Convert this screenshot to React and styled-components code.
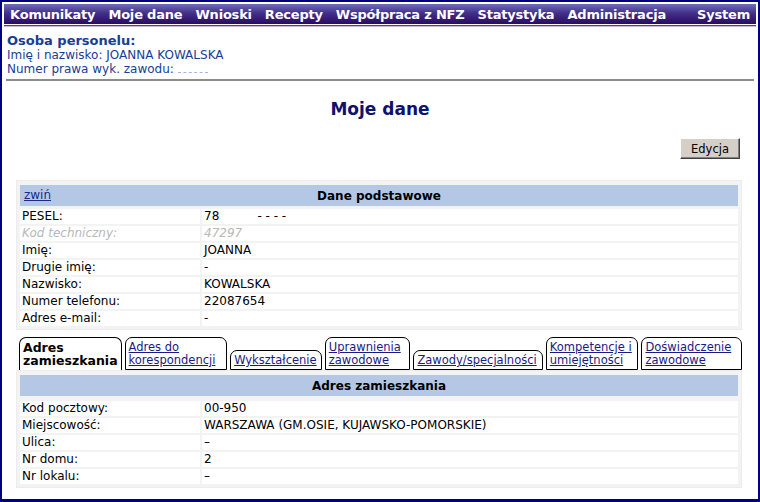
import React from 'react';
import styled, { createGlobalStyle } from 'styled-components';

const GlobalStyle = createGlobalStyle`
  html, body {
    margin: 0;
    padding: 0;
    background: #fff;
    font-family: "DejaVu Sans", Verdana, sans-serif;
    font-size: 12px;
    color: #000;
  }
`;

const Page = styled.div`
  box-sizing: border-box;
  width: 760px;
  height: 502px;
  border: 2px solid #000080;
  border-bottom-width: 3px;
  padding: 2px 2px 0;
  overflow: hidden;
`;

const MenuBar = styled.nav`
  display: flex;
  align-items: center;
  height: 20px;
  padding: 0 6px 0 6px;
  background: linear-gradient(#6e6eb8 0%, #43308a 45%, #2a0a62 100%);
  border-bottom: 1px solid #fff;
  box-shadow: 0 1px 0 #5c3b86, 0 2px 0 #c8bcd8;
`;

const MenuItem = styled.span`
  color: #fff;
  font-weight: bold;
  font-size: 13px;
  letter-spacing: -0.2px;
  margin-right: 13px;
  white-space: nowrap;
  ${(p) => p.$last && 'margin-left: auto; margin-right: 0;'}
`;

const Person = styled.section`
  padding: 9px 1px 3px;
  color: #163e96;
  border-bottom: 2px solid #8c8c8c;
  margin: 0 2px;
  line-height: 14px;
`;

const PersonTitle = styled.div`
  font-weight: bold;
  font-size: 13px;
  line-height: 14px;
`;

const Masked = styled.span`
  display: inline-block;
  width: 30px;
  border-bottom: 1px dashed #aab4e0;
  height: 8px;
`;

const Heading = styled.h1`
  margin: 18px 0 0;
  text-align: center;
  font-size: 17px;
  line-height: 20px;
  color: #10106e;
`;

const ButtonRow = styled.div`
  display: flex;
  justify-content: flex-end;
  padding: 19px 16px 0 0;
`;

const Button = styled.button`
  font-family: inherit;
  font-size: 11.5px;
  width: 60px;
  height: 21px;
  padding: 0;
  background: #d4d0c8;
  border: 1px solid;
  border-color: #fff #404040 #404040 #fff;
  box-shadow: inset -1px -1px 0 #808080;
  color: #000;
`;

const Box = styled.div`
  margin: ${(p) => p.$mt || 0}px 14px 0 12px;
  border: 1px solid #ececec;
  background: #f3f3f3;
  padding: 2px 1px 1px 1px;
`;

const Table = styled.table`
  width: 100%;
  border-spacing: 2px;
  border-collapse: separate;
  background: #f3f3f3;
`;

const HeadCell = styled.th`
  position: relative;
  background: #b4c8e6;
  height: 21px;
  padding: 0;
  font-size: 12px;
  font-weight: bold;
  text-align: center;
  box-sizing: content-box;
  border-bottom: ${(p) => p.$gap || 0}px solid #f3f3f3;
`;

const Toggle = styled.a`
  position: absolute;
  left: 4px;
  top: 3px;
  font-weight: normal;
  font-size: 12px;
  color: #1a2a86;
  text-decoration: underline;
`;

const Label = styled.td`
  width: 176px;
  background: #fff;
  height: 15px;
  padding: 0 2px;
  line-height: 15px;
  ${(p) => p.$muted && 'color: #b8b8b8; font-style: italic;'}
`;

const Value = styled.td`
  background: #fff;
  padding: 0 2px;
  line-height: 15px;
  ${(p) => p.$muted && 'color: #b8b8b8; font-style: italic;'}
`;

const Tabs = styled.div`
  display: flex;
  align-items: flex-end;
  gap: 3px;
  margin: 7px 14px 0 15px;
`;

const Tab = styled.div`
  box-sizing: border-box;
  width: ${(p) => p.$w}px;
  border: 1px solid #000;
  border-bottom: ${(p) => (p.$active ? 'none' : '1px solid #000')};
  border-radius: 7px 7px 0 0;
  padding: 3px 3px 1px;
  line-height: 13px;
  background: #fff;
  font-size: ${(p) => (p.$active ? '12.5px' : '11.5px')};
  font-weight: ${(p) => (p.$active ? 'bold' : 'normal')};
  color: ${(p) => (p.$active ? '#000' : '#1a1a86')};
  text-decoration: ${(p) => (p.$active ? 'none' : 'underline')};
  height: ${(p) => (p.$short ? 20 : 33)}px;
  white-space: ${(p) => (p.$short ? 'nowrap' : 'normal')};
`;

const basic = [
  ['PESEL:', '78', true],
  ['Kod techniczny:', '47297', false, true],
  ['Imię:', 'JOANNA'],
  ['Drugie imię:', '-'],
  ['Nazwisko:', 'KOWALSKA'],
  ['Numer telefonu:', '22087654'],
  ['Adres e-mail:', '-'],
];

const address = [
  ['Kod pocztowy:', '00-950'],
  ['Miejscowość:', 'WARSZAWA (GM.OSIE, KUJAWSKO-POMORSKIE)'],
  ['Ulica:', '–'],
  ['Nr domu:', '2'],
  ['Nr lokalu:', '–'],
];

const tabs = [
  { label: 'Adres zamieszkania', w: 103, active: true },
  { label: 'Adres do korespondencji', w: 103 },
  { label: 'Wykształcenie', w: 92, short: true },
  { label: 'Uprawnienia zawodowe', w: 86 },
  { label: 'Zawody/specjalności', w: 130, short: true },
  { label: 'Kompetencje i umiejętności', w: 93 },
  { label: 'Doświadczenie zawodowe', w: 101 },
];

const menu = ['Komunikaty', 'Moje dane', 'Wnioski', 'Recepty', 'Współpraca z NFZ', 'Statystyka', 'Administracja'];

const App = () => (
  <Page>
    <GlobalStyle />
    <MenuBar>
      {menu.map((m) => (
        <MenuItem key={m}>{m}</MenuItem>
      ))}
      <MenuItem $last>System</MenuItem>
    </MenuBar>
    <Person>
      <PersonTitle>Osoba personelu:</PersonTitle>
      <div>Imię i nazwisko: JOANNA KOWALSKA</div>
      <div>
        Numer prawa wyk. zawodu: <Masked />
      </div>
    </Person>
    <Heading>Moje dane</Heading>
    <ButtonRow>
      <Button>Edycja</Button>
    </ButtonRow>
    <Box $mt={21}>
      <Table>
        <tbody>
          <tr>
            <HeadCell colSpan={2} $gap={1}>
              <Toggle>zwiń</Toggle>
              Dane podstawowe
            </HeadCell>
          </tr>
          {basic.map(([l, v, masked, muted]) => (
            <tr key={l}>
              <Label $muted={muted}>{l}</Label>
              <Value $muted={muted}>
                {v}
                {masked && <>&nbsp;&nbsp;&nbsp;&nbsp;&nbsp;&nbsp;&nbsp;&nbsp;&nbsp; - - - -</>}
              </Value>
            </tr>
          ))}
        </tbody>
      </Table>
    </Box>
    <Tabs>
      {tabs.map((t) => (
        <Tab key={t.label} $w={t.w} $active={t.active} $short={t.short}>
          {t.label}
        </Tab>
      ))}
    </Tabs>
    <Box>
      <Table>
        <tbody>
          <tr>
            <HeadCell colSpan={2} $gap={3}>Adres zamieszkania</HeadCell>
          </tr>
          {address.map(([l, v]) => (
            <tr key={l}>
              <Label>{l}</Label>
              <Value>{v}</Value>
            </tr>
          ))}
        </tbody>
      </Table>
    </Box>
  </Page>
);

export default App;
